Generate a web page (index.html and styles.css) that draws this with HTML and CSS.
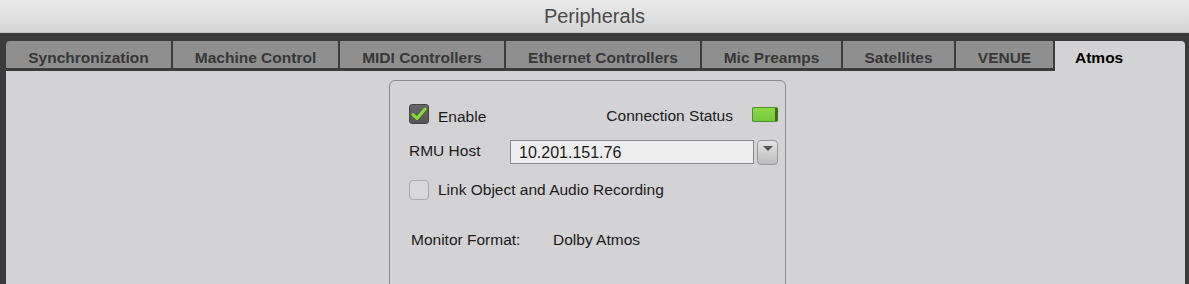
FILE: index.html
```html
<!DOCTYPE html>
<html lang="en">
<head>
  <meta charset="UTF-8" />
  <title>Peripherals</title>
  <link rel="stylesheet" href="styles.css">
</head>
<body>

  <div class="window">
    <div class="title-bar">Peripherals</div>

    <div class="frame">
      <div class="tabs">
        <div class="tab">Synchronization</div>
        <div class="tab">Machine Control</div>
        <div class="tab">MIDI Controllers</div>
        <div class="tab">Ethernet Controllers</div>
        <div class="tab">Mic Preamps</div>
        <div class="tab">Satellites</div>
        <div class="tab">VENUE</div>
        <div class="tab active">Atmos</div>
      </div>

      <div class="content">
        <div class="group">
          <div class="row">
            <label class="check-item">
              <span class="checkbox checked">
                <svg width="16" height="14" viewBox="0 0 16 14">
                  <path d="M2 7.5 L6 11.5 L14 2" fill="none" stroke="#86e02a" stroke-width="3" stroke-linecap="round" stroke-linejoin="round"/>
                </svg>
              </span>
              <span class="enable-text">Enable</span>
            </label>
            <div class="status">
              <span>Connection Status</span>
              <span class="led"></span>
            </div>
          </div>

          <div class="row host-row">
            <span class="host-label">RMU Host</span>
            <div class="host-input">10.201.151.76</div>
            <button class="drop-btn"><span class="arrow"></span></button>
          </div>

          <div class="row link-row">
            <label class="check-item">
              <span class="checkbox"></span>
              Link Object and Audio Recording
            </label>
          </div>

          <div class="row format-row">
            <span class="format-label">Monitor Format:</span>
            <span>Dolby Atmos</span>
          </div>
        </div>
      </div>
    </div>
  </div>

</body>
</html>
```

FILE: styles.css
```css
body {
  margin: 0;
  height: 284px;
  overflow: hidden;
  font-family: "Liberation Sans", Arial, sans-serif;
  background-color: #3b3b3b;
}

.window {
  display: flex;
  flex-direction: column;
  height: 100%;
}

.title-bar {
  height: 32px;
  line-height: 33px;
  text-align: center;
  font-size: 20px;
  color: #4a4a4a;
  background: linear-gradient(#ebebeb, #d5d5d5);
  border-bottom: 1px solid #c4c4c4;
}

.frame {
  flex: 1;
  display: flex;
  flex-direction: column;
  padding: 8px 4px 0 6px;
  background-color: #3b3b3b;
}

.tabs {
  display: flex;
  align-items: flex-start;
  height: 30px;
}

.tab {
  flex: none;
  box-sizing: border-box;
  height: 27px;
  padding-top: 6px;
  line-height: 21px;
  text-align: center;
  font-size: 15.5px;
  font-weight: bold;
  color: #373737;
  background-color: #8f8f8f;
  border-right: 2px solid #3b3b3b;
  white-space: nowrap;
}

/* tab widths include the 2px separator */
.tab:nth-child(1) { width: 167px; border-top-left-radius: 4px; }
.tab:nth-child(2) { width: 167px; }
.tab:nth-child(3) { width: 166px; }
.tab:nth-child(4) { width: 196px; }
.tab:nth-child(5) { width: 141px; }
.tab:nth-child(6) { width: 113px; }
.tab:nth-child(7) { width: 99px; }

.tab.active {
  flex: 1;
  height: 30px;
  padding-left: 20px;
  text-align: left;
  color: #000;
  background-color: #d3d2d4;
  border-right: none;
  border-top-right-radius: 4px;
}

.content {
  flex: 1;
  background-color: #d3d2d4;
  padding: 9px 0 0 383px;
}

.group {
  width: 397px;
  height: 240px;
  border: 1px solid #8b8b8b;
  border-radius: 6px;
  padding: 23px 7px 0 19px;
  box-sizing: border-box;
  color: #1b1b1b;
  font-size: 15.5px;
}

.row {
  display: flex;
  align-items: center;
}

.row:first-child {
  justify-content: space-between;
  height: 20px;
}

.check-item {
  display: flex;
  align-items: center;
  gap: 9px;
}

.enable-text {
  padding-top: 5px;
}

.checkbox {
  flex: none;
  width: 20px;
  height: 20px;
  box-sizing: border-box;
  border: 1px solid #a9a9a9;
  border-radius: 4px;
  background-color: #d9d8da;
  display: flex;
  align-items: center;
  justify-content: center;
}

.checkbox.checked {
  border: 1px solid #444;
  border-radius: 3px;
  background: linear-gradient(#666, #555);
}

.status {
  display: flex;
  align-items: center;
  gap: 19px;
  padding-top: 3px;
}

.led {
  width: 26px;
  height: 15px;
  box-sizing: border-box;
  border: 1px solid #4f8f27;
  border-right: 3px solid #3f6a22;
  border-radius: 2px;
  background: linear-gradient(#8ed94b, #74c83a);
  margin-top: -3px;
}

.host-row {
  margin-top: 16px;
  height: 25px;
  align-items: flex-start;
}

.host-label {
  flex: none;
  width: 101px;
  line-height: 22px;
}

.host-input {
  flex: none;
  width: 244px;
  height: 24px;
  box-sizing: border-box;
  border: 1px solid #8a8a8a;
  background-color: #ededed;
  padding-left: 8px;
  line-height: 23px;
  font-size: 16px;
}

.drop-btn {
  flex: none;
  margin-left: 3px;
  width: 21px;
  height: 25px;
  padding: 0;
  border: 1px solid #9a9a9a;
  border-radius: 4px;
  background: linear-gradient(#e4e4e4, #bcbcbc);
  display: flex;
  justify-content: center;
}

.arrow {
  margin-top: 5px;
  width: 0;
  height: 0;
  border-left: 5px solid transparent;
  border-right: 5px solid transparent;
  border-top: 5px solid #555;
}

.link-row {
  margin-top: 15px;
  height: 20px;
}

.format-row {
  margin-top: 30px;
  height: 20px;
  padding-left: 2px;
}

.format-label {
  width: 142px;
}
```
